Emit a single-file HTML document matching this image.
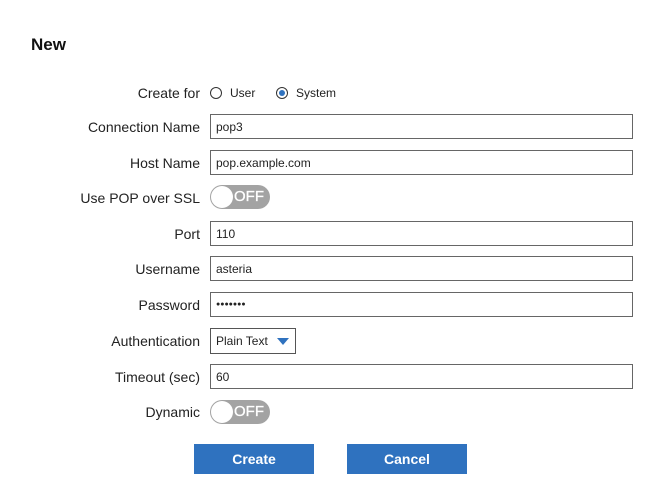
<!DOCTYPE html>
<html><head><style>
body{margin:0;width:659px;height:503px;background:#fff;font-family:"Liberation Sans",Arial,sans-serif;position:relative;overflow:hidden;color:#222}
.a{position:absolute}
h1{position:absolute;left:31px;top:35px;margin:0;font-size:17px;font-weight:bold;color:#111}
.l{position:absolute;right:459px;font-size:14px;text-align:right;white-space:nowrap}
.i{position:absolute;left:210px;height:23px;border:1px solid #666;font-size:12px;line-height:24px;padding-left:5px;box-sizing:content-box;width:416px}
.t{position:absolute;left:210px;width:60px;height:24px;border-radius:12px;background:#a3a3a3;}
.t .k{position:absolute;left:1px;top:1px;width:22px;height:22px;border-radius:50%;background:#fff}
.t span{position:absolute;left:24px;top:3px;color:#fff;font-size:15px;-webkit-text-stroke:0.3px #fff}
.b{position:absolute;top:444px;width:120px;height:30px;background:#2f72bf;color:#fff;font-weight:bold;font-size:14px;text-align:center;line-height:30px}
.r{position:absolute;top:87px;width:10px;height:10px;border:1px solid #333;border-radius:50%}
</style></head><body>
<h1>New</h1>
<div class="l" style="top:85px">Create for</div>
<div class="r" style="left:210px"></div><div class="a" style="left:230px;top:86px;font-size:12px">User</div>
<div class="r" style="left:276px"><div class="a" style="left:2px;top:2px;width:6px;height:6px;border-radius:50%;background:#2f72bf"></div></div><div class="a" style="left:296px;top:86px;font-size:12px">System</div>
<div class="l" style="top:119px">Connection Name</div><div class="i" style="top:114px">pop3</div>
<div class="l" style="top:155px">Host Name</div><div class="i" style="top:150px">pop.example.com</div>
<div class="l" style="top:190px">Use POP over SSL</div><div class="t" style="top:185px"><div class="k"></div><span>OFF</span></div>
<div class="l" style="top:226px">Port</div><div class="i" style="top:221px">110</div>
<div class="l" style="top:261px">Username</div><div class="i" style="top:256px">asteria</div>
<div class="l" style="top:297px">Password</div><div class="i" style="top:292px;font-size:7px;letter-spacing:0px">●●●●●●●</div>
<div class="l" style="top:333px">Authentication</div>
<div class="a" style="left:210px;top:328px;width:84px;height:24px;border:1px solid #555;font-size:12px;line-height:25px;padding-left:0"><span style="margin-left:5px">Plain Text</span><span class="a" style="left:66px;top:9px;width:0;height:0;border-left:6px solid transparent;border-right:6px solid transparent;border-top:7px solid #2f72bf"></span></div>
<div class="l" style="top:369px">Timeout (sec)</div><div class="i" style="top:364px">60</div>
<div class="l" style="top:404px">Dynamic</div><div class="t" style="top:400px"><div class="k"></div><span>OFF</span></div>
<div class="b" style="left:194px">Create</div>
<div class="b" style="left:347px">Cancel</div>
</body></html>
